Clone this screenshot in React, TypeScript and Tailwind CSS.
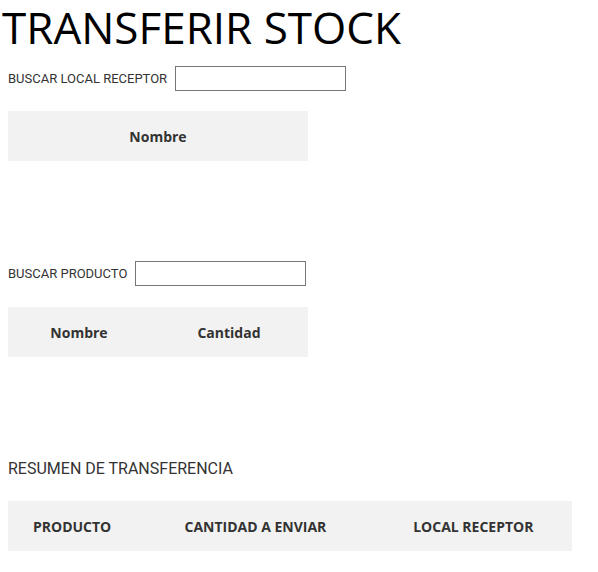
const App = () => {
  return (
    <div className="bg-white w-[598px] h-[572px] overflow-hidden text-[#333]">
      <h1 className="font-['Open_Sans',sans-serif] text-[44px] leading-[54px] text-black pl-[2px]">
        TRANSFERIR STOCK
      </h1>

      <div className="flex items-center pl-2 mt-[12px] h-[25px]">
        <label className="font-['Roboto',sans-serif] text-[13px] mr-[8px]">BUSCAR LOCAL RECEPTOR</label>
        <input type="text" className="w-[171px] h-[25px] border border-[#767676] bg-white" />
      </div>

      <table className="ml-2 mt-[20px] w-[300px] font-['Open_Sans',sans-serif] text-[14px] font-bold">
        <thead>
          <tr className="bg-[#f2f2f2] h-[50px]">
            <th className="text-center">Nombre</th>
          </tr>
        </thead>
      </table>

      <div className="flex items-center pl-2 mt-[100px] h-[25px]">
        <label className="font-['Roboto',sans-serif] text-[13px] mr-[8px]">BUSCAR PRODUCTO</label>
        <input type="text" className="w-[171px] h-[25px] border border-[#767676] bg-white" />
      </div>

      <table className="ml-2 mt-[21px] w-[300px] font-['Open_Sans',sans-serif] text-[14px] font-bold">
        <thead>
          <tr className="bg-[#f2f2f2] h-[50px]">
            <th className="text-center w-[142px]">Nombre</th>
            <th className="text-center">Cantidad</th>
          </tr>
        </thead>
      </table>

      <h2 className="font-['Roboto',sans-serif] text-[16px] pl-2 mt-[101px] leading-[22px]">
        RESUMEN DE TRANSFERENCIA
      </h2>

      <table className="ml-2 mt-[21px] w-[564px] font-['Open_Sans',sans-serif] text-[14px] font-bold">
        <thead>
          <tr className="bg-[#f2f2f2] h-[50px]">
            <th className="text-center w-[128px]">PRODUCTO</th>
            <th className="text-center w-[238px]">CANTIDAD A ENVIAR</th>
            <th className="text-center w-[197px]">LOCAL RECEPTOR</th>
          </tr>
        </thead>
      </table>
    </div>
  )
}

export default App
